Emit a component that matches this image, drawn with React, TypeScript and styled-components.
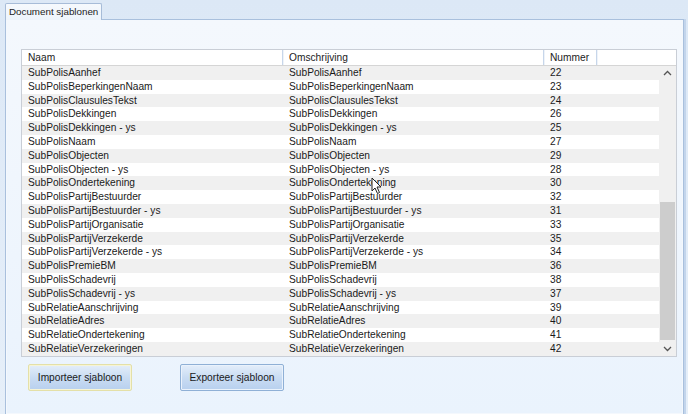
import styled, { createGlobalStyle } from 'styled-components'

const rows: [string, number][] = [
	['SubPolisAanhef', 22],
	['SubPolisBeperkingenNaam', 23],
	['SubPolisClausulesTekst', 24],
	['SubPolisDekkingen', 26],
	['SubPolisDekkingen - ys', 25],
	['SubPolisNaam', 27],
	['SubPolisObjecten', 29],
	['SubPolisObjecten - ys', 28],
	['SubPolisOndertekening', 30],
	['SubPolisPartijBestuurder', 32],
	['SubPolisPartijBestuurder - ys', 31],
	['SubPolisPartijOrganisatie', 33],
	['SubPolisPartijVerzekerde', 35],
	['SubPolisPartijVerzekerde - ys', 34],
	['SubPolisPremieBM', 36],
	['SubPolisSchadevrij', 38],
	['SubPolisSchadevrij - ys', 37],
	['SubRelatieAanschrijving', 39],
	['SubRelatieAdres', 40],
	['SubRelatieOndertekening', 41],
	['SubRelatieVerzekeringen', 42],
]

const GlobalStyle = createGlobalStyle`
	html, body {
		margin: 0;
		padding: 0;
		background: #dfeaf7;
		font-family: "Liberation Sans", Arial, sans-serif;
		font-size: 10.2px;
		color: #1a1a1a;
		overflow: hidden;
	}
	* {
		box-sizing: border-box;
	}
`

export default function App() {
	return (
		<Window>
			<GlobalStyle />
			<TabStrip>
				<Tab>Document sjablonen</Tab>
			</TabStrip>
			<Panel>
				<Grid>
					<Body>
						<Table>
							<HeaderRow>
								<HeadCell $w={261}>Naam</HeadCell>
								<HeadCell $w={261}>Omschrijving</HeadCell>
								<HeadCell $w={53}>Nummer</HeadCell>
								<HeadFill />
							</HeaderRow>
							{rows.map(([name, nr], i) => (
								<Row key={name} $odd={i % 2 === 0}>
									<Cell $w={261}>{name}</Cell>
									<Cell $w={261}>{name}</Cell>
									<Cell $w={53}>{nr}</Cell>
								</Row>
							))}
						</Table>
						<ScrollBar>
							<Arrow>
								<svg width="9" height="6" viewBox="0 0 9 6"><path d="M1 5 L4.5 1.5 L8 5" fill="none" stroke="#555" strokeWidth="1.3" /></svg>
							</Arrow>
							<Track>
								<Thumb />
							</Track>
							<Arrow>
								<svg width="9" height="6" viewBox="0 0 9 6"><path d="M1 1 L4.5 4.5 L8 1" fill="none" stroke="#555" strokeWidth="1.3" /></svg>
							</Arrow>
						</ScrollBar>
					</Body>
				</Grid>
				<Buttons>
					<Button $focus>Importeer sjabloon</Button>
					<Button>Exporteer sjabloon</Button>
				</Buttons>
				<Cursor width="12" height="18" viewBox="0 0 12 18">
					<path d="M1 1 L1 14 L4 11 L6.5 16.5 L8.5 15.5 L6 10 L10 10 Z" fill="#fff" stroke="#222" strokeWidth="1" strokeLinejoin="round" />
				</Cursor>
			</Panel>
		</Window>
	)
}

const Window = styled.div`
	width: 688px;
	height: 414px;
	background: linear-gradient(#dce8f6, #e6eff9);
	display: flex;
	flex-direction: column;
	padding: 3px 4px 0 5px;
`

const TabStrip = styled.div`
	display: flex;
	height: 17px;
	position: relative;
	z-index: 1;
`

const Tab = styled.div`
	height: 17px;
	padding: 0 3px 0 3px;
	border: 1px solid #a7bcd8;
	border-bottom: none;
	border-radius: 2px 2px 0 0;
	background: linear-gradient(#f6f9fd, #eef4fb);
	line-height: 15px;
	font-size: 9.8px;
	color: #222;
`

const Panel = styled.div`
	flex: 1;
	position: relative;
	margin-top: -1px;
	border: 1px solid #a9c0dd;
	border-bottom: none;
	box-shadow: inset 0 0 0 1px #f4f8fd, 2px 0 0 #c3d5ec;
	background: linear-gradient(#f4f8fd, #eaf3fd);
	padding: 29px 3px 0 15px;
	display: flex;
	flex-direction: column;
`

const Grid = styled.div`
	width: 656px;
	border: 1px solid #c9ced6;
	background: #fff;
`

const Body = styled.div`
	display: flex;
	position: relative;
`

const Table = styled.div`
	flex: 1;
	display: flex;
	flex-direction: column;
`

const HeaderRow = styled.div`
	display: flex;
	height: 16px;
	border-bottom: 1px solid #d5d5d5;
	background: #fff;
`

const HeadCell = styled.div<{ $w: number }>`
	width: ${p => p.$w}px;
	padding-left: 6px;
	line-height: 16px;
	border-right: 1px solid #c7d6ea;
	box-shadow: 1px 0 0 #eef3f9;
	color: #222;
	white-space: nowrap;
	overflow: hidden;
`

const HeadFill = styled.div`
	flex: 1;
`

const Row = styled.div<{ $odd?: boolean }>`
	display: flex;
	height: 13.8px;
	background: ${p => (p.$odd ? '#f0f0f0' : '#ffffff')};
`

const Cell = styled.div<{ $w: number }>`
	width: ${p => p.$w}px;
	padding-left: 6px;
	line-height: 14px;
	white-space: nowrap;
	overflow: hidden;
`

const ScrollBar = styled.div`
	position: absolute;
	right: 0;
	top: 16px;
	bottom: 0;
	width: 17px;
	background: #f0f0f0;
	display: flex;
	flex-direction: column;
`

const Arrow = styled.div`
	height: 14px;
	display: flex;
	align-items: center;
	justify-content: center;
`

const Track = styled.div`
	flex: 1;
	display: flex;
	flex-direction: column;
	justify-content: flex-end;
	padding: 0 1px 2px;
`

const Thumb = styled.div`
	height: 138px;
	background: #cdcdcd;
`

const Buttons = styled.div`
	display: flex;
	gap: 48px;
	padding: 7px 0 0 7px;
`

const Button = styled.button<{ $focus?: boolean }>`
	width: 104px;
	height: 27px;
	border: 1px solid ${p => (p.$focus ? '#e4e0a8' : '#8fb0d6')};
	border-radius: 2px;
	background: linear-gradient(#e4eefa 0%, #c9dcf3 50%, #b8d0ee 100%);
	box-shadow: inset 0 0 0 1px ${p => (p.$focus ? '#f6f4d6' : '#eaf2fc')};
	font-family: "Liberation Sans", Arial, sans-serif;
	font-size: 10.2px;
	color: #1a1a1a;
	padding: 0;
`

const Cursor = styled.svg`
	position: absolute;
	left: 365px;
	top: 157px;
`
